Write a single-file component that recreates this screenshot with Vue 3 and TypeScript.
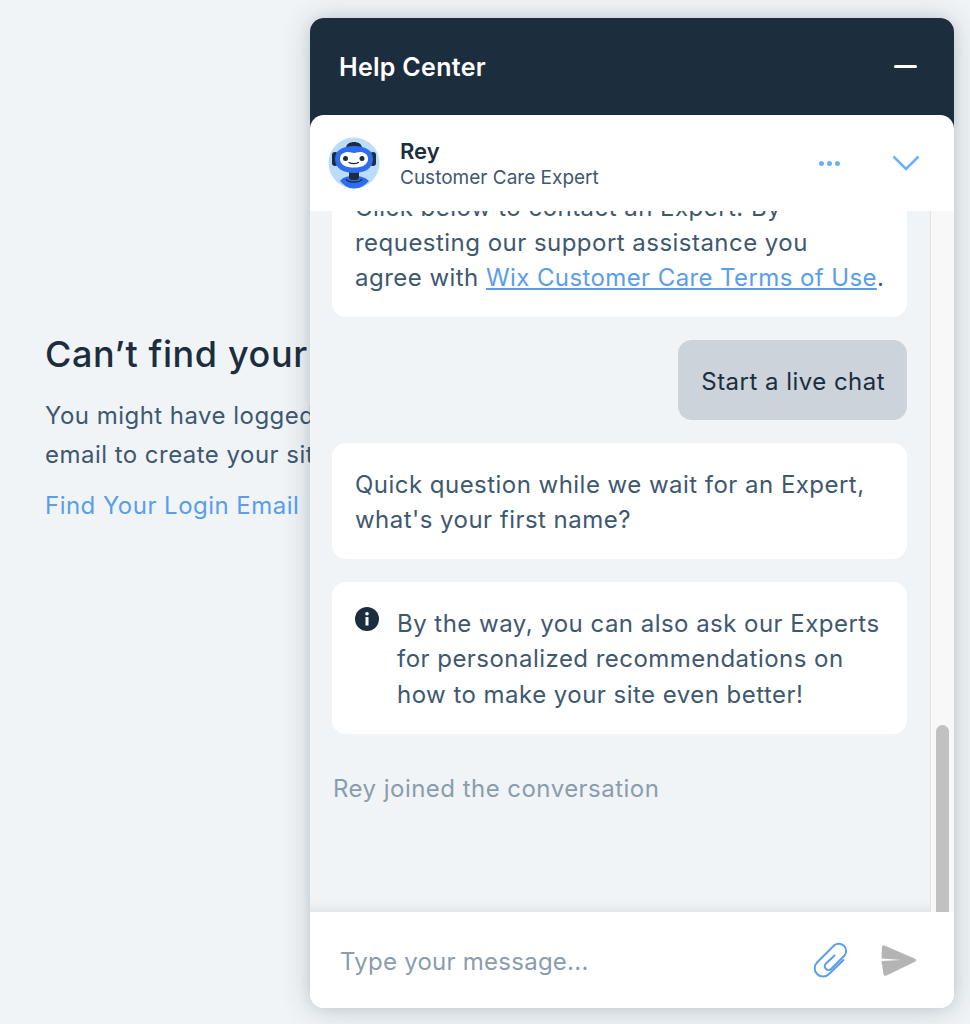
<script setup lang="ts">
const subtitle = 'Customer Care Expert';
</script>

<template>
  <div class="page">
    <section class="login-help">
      <h2>Can’t find your site?</h2>
      <p>You might have logged in with a different<br />email to create your site.</p>
      <a class="find-link">Find Your Login Email</a>
    </section>

    <div class="widget">
      <header class="top">
        <span class="title">Help Center</span>
        <span class="minimize"></span>
      </header>

      <div class="agent">
        <svg class="avatar" viewBox="0 0 52 52">
          <circle cx="26" cy="26" r="25.5" fill="#bcdcfb" />
          <path d="M12 44c2-3 6-5 14-5s12 2 15 5c-4 4.500-9 7.500-15 7.500S16 48.500 12 44z" fill="#2f6df0" />
          <path d="M18 42c2 4 14 4 16 0" fill="none" stroke="#1c2d3e" stroke-width="1.500" />
          <rect x="21" y="33" width="10" height="10" rx="3" fill="#1c2d3e" />
          <rect x="4" y="15" width="6" height="14" rx="3" fill="#1c2d3e" />
          <rect x="42" y="15" width="6" height="14" rx="3" fill="#1c2d3e" />
          <path d="M18 11c0-4 4-6 8-6s8 2 8 6z" fill="#1c2d3e" />
          <path d="M7 22c0-8 7-13 19-13s19 5 19 13c0 9-8 14-19 14S7 31 7 22z" fill="#2f6df0" />
          <path d="M12 22c0-5 4-7 8-7 3 0 4 1 6 1s3-1 6-1c4 0 8 2 8 7 0 6-6 8.500-14 8.500S12 28 12 22z" fill="#fff" />
          <circle cx="17.500" cy="21.500" r="2.500" fill="#1c2d3e" />
          <circle cx="34" cy="21.500" r="2.500" fill="#1c2d3e" />
          <path d="M21 25.500c2.500 1.500 7 1.500 9.500 0" fill="none" stroke="#1c2d3e" stroke-width="1.300" stroke-linecap="round" />
        </svg>
        <div class="agent-text">
          <strong>Rey</strong>
          <span>{{ subtitle }}</span>
        </div>
        <span class="dots"><i></i><i></i><i></i></span>
        <svg class="chevron" viewBox="0 0 28 16">
          <path d="M1.500 1.500 14 14 26.500 1.500" fill="none" stroke="#6ab2f5" stroke-width="2.500" />
        </svg>
      </div>

      <div class="chat">
        <div class="messages">
          <div class="bubble terms">
            Click below to contact an Expert. By<br />requesting our support assistance you<br />agree with
            <a>Wix Customer Care Terms of Use</a>.
          </div>
          <div class="bubble mine">Start a live chat</div>
          <div class="bubble">Quick question while we wait for an Expert, what's your first name?</div>
          <div class="bubble info">
            <svg class="info-icon" viewBox="0 0 24 24">
              <circle cx="12" cy="12" r="12" fill="#1c2d3e" />
              <rect x="10.500" y="10" width="3" height="8.500" rx="0.500" fill="#fff" />
              <circle cx="12" cy="6.800" r="1.800" fill="#fff" />
            </svg>
            <span>By the way, you can also ask our Experts for personalized recommendations on how to make your site even better!</span>
          </div>
          <div class="joined">Rey joined the conversation</div>
        </div>
        <div class="scrollbar"><div class="thumb"></div></div>
      </div>

      <footer class="composer">
        <span class="placeholder">Type your message...</span>
        <svg class="clip" viewBox="0 0 46 46">
          <path d="M26.500 17.500 18 25.500a3.700 3.700 0 0 0 5 5.500L36.500 17.500a7.300 7.300 0 0 0-10.200-10.300L9 24.500a8.300 8.300 0 0 0 12 11.500L35.500 22" fill="none" stroke="#5a9eea" stroke-width="2" stroke-linecap="round" />
        </svg>
        <svg class="send" viewBox="0 0 46 42">
          <path d="M8.500 5.500 38.500 18.500c2 1 2 2.500 0 3.500L10.500 35.500c-1.500 .7-2.500 .2-3-1L5.500 21 25 20 5.500 18.500 6 7.500c0-1.500 1-2.500 2.500-2z" fill="#b4b4b4" />
        </svg>
      </footer>
    </div>
  </div>
</template>

<style>
html,
body {
  margin: 0;
  background: #f0f4f7;
}
</style>

<style scoped>
.page {
  position: relative;
  width: 970px;
  height: 1024px;
  overflow: hidden;
  background: #f0f4f7;
  font-family: Inter, "Open Sans", sans-serif;
  color: #3e5870;
}

.login-help {
  width: 264px;
  padding: 331px 0 0 45px;
  white-space: nowrap;
}

.login-help h2 {
  margin: 0 0 19px;
  font-size: 36px;
  line-height: 46px;
  font-weight: 500;
  letter-spacing: 0.6px;
  color: #1c2d3e;
}

.login-help p {
  margin: 0 0 15px;
  font-size: 24px;
  line-height: 39px;
  letter-spacing: 0.47px;
}

.find-link {
  font-size: 24px;
  line-height: 34px;
  letter-spacing: 0.47px;
  color: #5a9eea;
}

.widget {
  position: absolute;
  left: 310px;
  top: 18px;
  width: 644px;
  height: 990px;
  display: flex;
  flex-direction: column;
  border-radius: 14px;
  background: #f0f4f7;
  box-shadow: 0 2px 30px rgba(22, 45, 61, 0.2), 0 0 12px rgba(22, 45, 61, 0.08);
  overflow: hidden;
}

.top {
  flex: none;
  height: 112px;
  margin-bottom: -15px;
  padding: 0 37px 15px 29px;
  box-sizing: border-box;
  display: flex;
  align-items: center;
  justify-content: space-between;
  background: #1c2d3e;
}

.title {
  font-size: 25px;
  font-weight: 600;
  letter-spacing: 0.3px;
  color: #fff;
}

.minimize {
  width: 23px;
  height: 3px;
  border-radius: 2px;
  background: #fff;
}

.agent {
  position: relative;
  z-index: 2;
  flex: none;
  height: 96px;
  padding: 0 34px 0 18px;
  box-sizing: border-box;
  display: flex;
  align-items: center;
  background: #fff;
  border-radius: 14px 14px 0 0;
}

.avatar {
  width: 52px;
  height: 52px;
  margin-right: 20px;
}

.agent-text {
  flex: 1;
  display: flex;
  flex-direction: column;
  gap: 1px;
  padding-top: 3px;
  font-size: 19px;
  line-height: 26px;
}

.agent-text strong {
  font-size: 22px;
  font-weight: 600;
  color: #1c2d3e;
}

.dots {
  display: flex;
  gap: 3px;
  margin-right: 52px;
}

.dots i {
  width: 5px;
  height: 5px;
  border-radius: 50%;
  background: #6ab2f5;
}

.chevron {
  width: 28px;
  height: 16px;
}

.chat {
  flex: 1;
  min-height: 0;
  position: relative;
  display: flex;
  overflow: hidden;
  box-shadow: inset 0 -14px 12px -12px rgba(30, 45, 62, 0.1);
}

.messages {
  flex: 1;
  min-width: 0;
  display: flex;
  flex-direction: column;
  justify-content: flex-end;
  gap: 23px;
  padding: 0 47px 106px 22px;
  font-size: 24px;
  line-height: 35.2px;
  letter-spacing: 0.47px;
}

.bubble {
  flex: none;
  padding: 24px 22px 22px 23px;
  background: #fff;
  border-radius: 14px;
}

.bubble a {
  color: #5a9eea;
  text-decoration: underline;
  letter-spacing: 0.4px;
}

.terms {
  padding-right: 8px;
  padding-bottom: 21px;
}

.mine {
  align-self: flex-end;
  padding-bottom: 21px;
  background: #ccd3da;
  color: #1c2d3e;
}

.info {
  display: flex;
  gap: 18px;
}

.info-icon {
  flex: none;
  width: 24px;
  height: 24px;
  margin-top: 1px;
}

.joined {
  flex: none;
  margin-top: 14px;
  margin-left: 1px;
  color: #8a9cae;
}

.scrollbar {
  position: absolute;
  top: 0;
  right: 0;
  bottom: 0;
  width: 24px;
  box-sizing: border-box;
  background: #f8f8f8;
  border-left: 1px solid #e4e4e4;
}

.thumb {
  position: absolute;
  left: 5px;
  bottom: 0;
  width: 13px;
  height: 187px;
  border-radius: 7px 7px 0 0;
  background: #c1c1c1;
}

.composer {
  flex: none;
  position: relative;
  height: 96px;
  padding: 2px 32px 0 30px;
  box-sizing: border-box;
  display: flex;
  align-items: center;
  background: #fff;
}

.placeholder {
  flex: 1;
  font-size: 24px;
  letter-spacing: 0.25px;
  color: #8a9cae;
}

.clip {
  width: 46px;
  height: 46px;
  margin-right: 22px;
}

.send {
  width: 46px;
  height: 42px;
}
</style>
